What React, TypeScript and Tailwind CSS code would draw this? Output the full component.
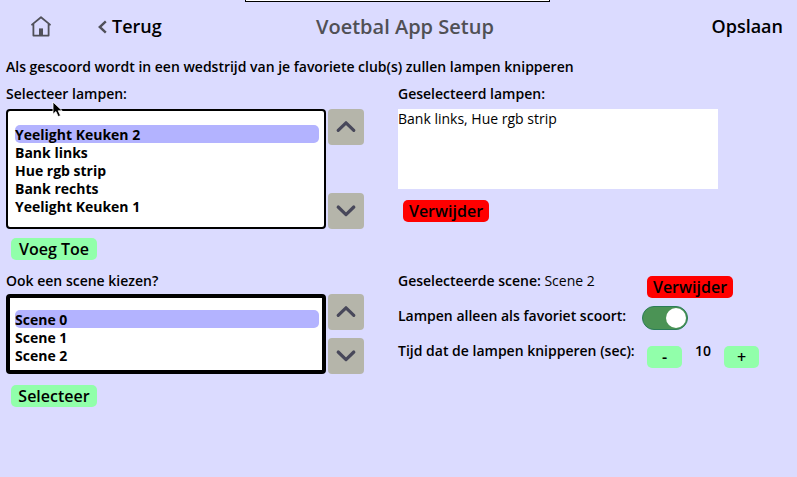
import React from "react";

const label = "block h-[18px] whitespace-nowrap text-[14px] leading-[18px] font-semibold";

function ActionButton({ children, className }: { children: React.ReactNode; className: string }) {
  return (
    <button
      className={`flex h-[22px] shrink-0 items-center justify-center rounded-[5px] whitespace-nowrap text-[16px] leading-[22px] font-semibold ${className}`}
    >
      {children}
    </button>
  );
}

function ScrollButton({ up = false }: { up?: boolean }) {
  return (
    <button className="flex size-9 items-center justify-center rounded-[4px] bg-[#b5b5aa]">
      <svg width="36" height="36" viewBox="0 0 36 36" fill="none" stroke="#48485a" strokeWidth="3.2" strokeLinecap="round" strokeLinejoin="round">
        <path d={up ? "M10.2 21.4 18 13.8 25.8 21.4" : "M10.2 14 18 21.6 25.8 14"} />
      </svg>
    </button>
  );
}

function List({ items, className }: { items: string[]; className: string }) {
  return (
    <ul className={`w-80 rounded-[4px] border-black bg-white text-[14px] leading-[20px] font-bold ${className}`}>
      {items.map((item, i) => (
        <li key={item} className={`h-[18px] w-[304px] rounded-[5px] whitespace-nowrap ${i === 0 ? "bg-[#b3b3ff]" : ""}`}>
          {item}
        </li>
      ))}
    </ul>
  );
}

export default function App() {
  return (
    <div className="relative h-[477px] w-[797px] overflow-hidden bg-[#dbdbff] font-['Open_Sans','Noto_Sans',sans-serif] text-black">
      <div className="absolute top-0 left-[245px] h-[2px] w-[305px] border-x border-b border-black bg-white" />

      <header className="flex h-[53px] items-center text-[18px] font-semibold">
        <svg className="ml-[30px] shrink-0" width="22" height="22" viewBox="0 0 22 22" fill="none" stroke="#505059" strokeWidth="1.8" strokeLinejoin="round" strokeLinecap="round">
          <path d="M2 8.6 11 1.2 20 8.6M3.4 8V19.6H18.6V8" />
          <path d="M9 12.4H13V19.6H9Z" fill="#505059" stroke="none" />
        </svg>
        <button className="ml-[45px] flex w-[219px] items-center gap-[5px]">
          <svg width="10" height="14" viewBox="0 0 10 14" fill="none" stroke="#505059" strokeWidth="2.4">
            <path d="M8.8 1.4 2.8 7 8.8 12.6" />
          </svg>
          <span>Terug</span>
        </button>
        <h1 className="w-[177px] whitespace-nowrap text-[20px] text-[#505055]">Voetbal App Setup</h1>
        <button className="mr-[14px] ml-auto">Opslaan</button>
      </header>

      <main className="px-[6px] pt-[5px]">
        <p className={`${label} tracking-[-0.01px]`}>Als gescoord wordt in een wedstrijd van je favoriete club(s) zullen lampen knipperen</p>
        <div className="mt-[9px] flex gap-[34px]">
          <section className="w-[358px]">
            <span className={label}>Selecteer lampen:</span>
            <div className="mt-[6px] flex gap-[2px]">
              <List
                className="h-[120px] border-2 pt-[14px] pl-[7px]"
                items={["Yeelight Keuken 2", "Bank links", "Hue rgb strip", "Bank rechts", "Yeelight Keuken 1"]}
              />
              <div className="flex flex-col justify-between">
                <ScrollButton up />
                <ScrollButton />
              </div>
            </div>
            <ActionButton className="mt-[9px] ml-[5px] w-[86px] bg-[#91ffaa]">Voeg Toe</ActionButton>
            <span className={`${label} mt-[12px]`}>Ook een scene kiezen?</span>
            <div className="mt-[4px] flex gap-[2px]">
              <List className="h-[80px] border-4 pt-[12px] pl-[5px]" items={["Scene 0", "Scene 1", "Scene 2"]} />
              <div className="flex flex-col justify-between">
                <ScrollButton up />
                <ScrollButton />
              </div>
            </div>
            <ActionButton className="mt-[11px] ml-[5px] w-[86px] bg-[#91ffaa]">Selecteer</ActionButton>
          </section>

          <section className="w-[393px] shrink-0">
            <span className={label}>Geselecteerd lampen:</span>
            <div className="mt-[6px] h-20 w-80 bg-white text-[14px] leading-[20px]">Bank links, Hue rgb strip</div>
            <ActionButton className="mt-[11px] ml-[5px] w-[86px] bg-[#ff0000]">Verwijder</ActionButton>

            <div className="mt-[50px] flex h-[34px]">
              <span className={`${label} w-[249px]`}>
                Geselecteerde scene: <span className="font-normal">Scene 2</span>
              </span>
              <ActionButton className="mt-[4px] w-[86px] bg-[#ff0000]">Verwijder</ActionButton>
            </div>
            <div className="flex h-[36px]">
              <span className={`${label} mt-[1px] w-[244px]`}>Lampen alleen als favoriet scoort:</span>
              <button className="flex h-6 w-[46px] items-center justify-end rounded-full border border-[#2b7d59] bg-[#4b9355] pr-px">
                <span className="size-5 rounded-full bg-white" />
              </button>
            </div>
            <div className="flex">
              <span className={`${label} w-[249px]`}>Tijd dat de lampen knipperen (sec):</span>
              <ActionButton className="mt-[4px] w-[35px] bg-[#91ffaa]">-</ActionButton>
              <span className={`${label} w-[42px] text-center`}>10</span>
              <ActionButton className="mt-[4px] w-[35px] bg-[#91ffaa]">+</ActionButton>
            </div>
          </section>
        </div>
      </main>

      <svg className="absolute top-[101px] left-[52px]" width="12" height="17" viewBox="0 0 12 17">
        <path d="M1 1V13.2L3.9 10.5 6.2 15.6 8.5 14.6 6.2 9.7H10.2Z" fill="#000" stroke="#fff" strokeWidth="0.8" />
      </svg>
    </div>
  );
}
